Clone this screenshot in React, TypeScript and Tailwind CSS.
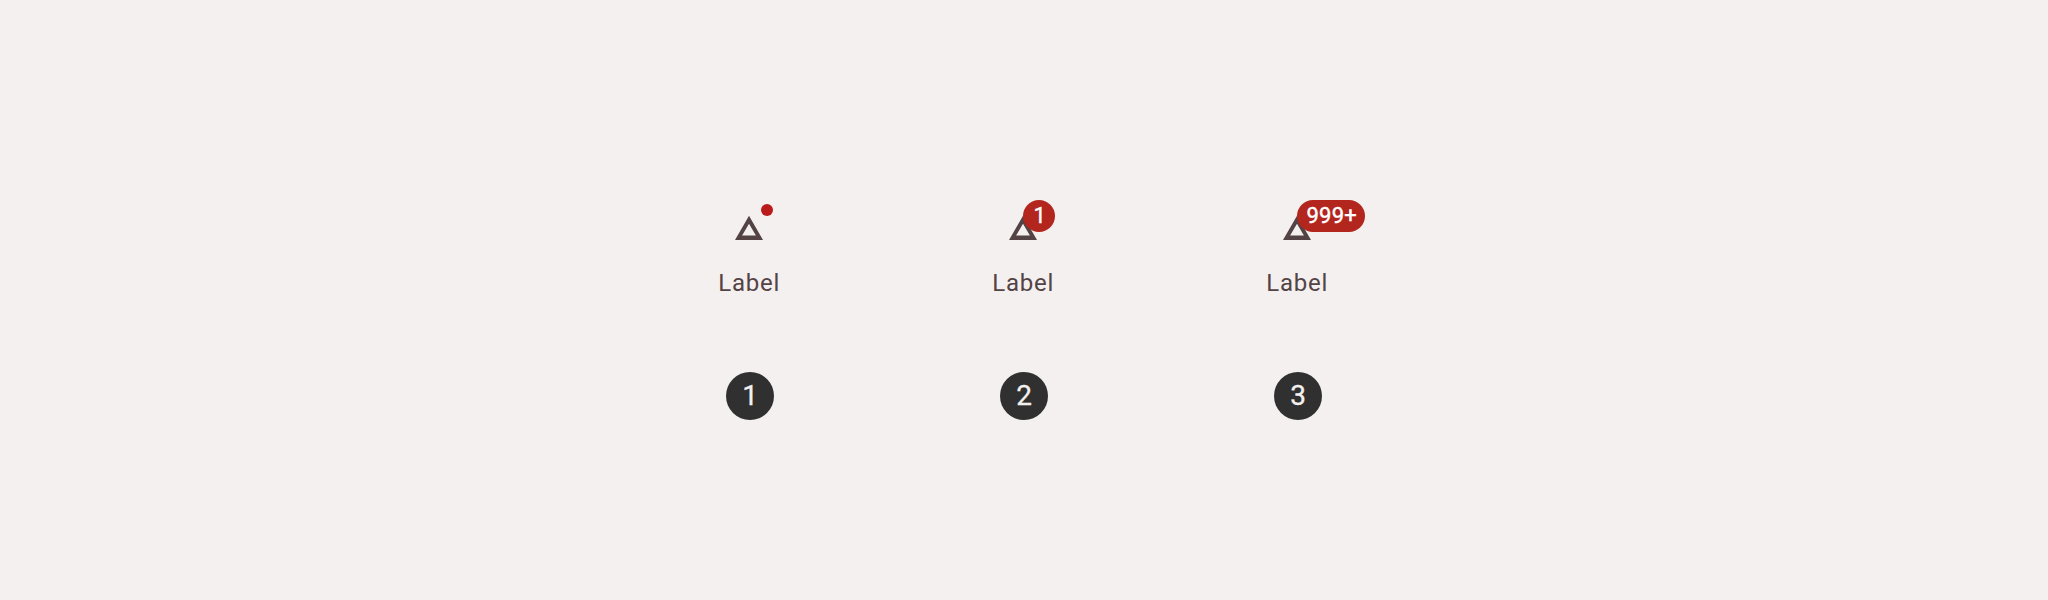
const items = [
  { step: 1, badge: "" },
  { step: 2, badge: "1" },
  { step: 3, badge: "999+" },
];

function Badge({ text }: { text: string }) {
  if (text === "") {
    return <span className="absolute left-[35px] top-1 size-3 rounded-full bg-[#ba1a1a]" />;
  }
  return (
    <span
      className={`absolute left-[23px] top-0 flex h-8 items-center justify-center rounded-full bg-[#b3261e] pl-[1.5px] text-[22px] leading-8 tracking-[0.2px] text-white [-webkit-text-stroke:0.4px_white] ${
        text.length > 1 ? "w-[68px]" : "w-8"
      }`}
    >
      {text}
    </span>
  );
}

function NavItem({ step, badge }: { step: number; badge: string }) {
  return (
    <div className="flex w-[274px] flex-col items-center">
      <div className="relative h-12 w-12">
        <svg className="size-full" viewBox="0 0 48 48" fill="#534344">
          <path fillRule="evenodd" d="M23 15.8L37 40H9ZM23 23.8L16.1 35.6H29.9Z" />
        </svg>
        <Badge text={badge} />
      </div>
      <span className="mt-[19px] h-8 pr-[1.5px] text-[24px] leading-8 tracking-[0.8px] text-[#534344]">Label</span>
      <span className="mt-[73px] flex size-12 items-center justify-center rounded-full bg-[#303030] text-[28px] leading-none text-[#f4f0ef] [-webkit-text-stroke:0.3px_#f4f0ef]">
        {step}
      </span>
    </div>
  );
}

export default function App() {
  return (
    <main className="flex h-[600px] w-full justify-center bg-[#f4f0ef] pt-[200px] font-['Roboto',sans-serif]">
      {items.map((item) => (
        <NavItem key={item.step} {...item} />
      ))}
    </main>
  );
}
